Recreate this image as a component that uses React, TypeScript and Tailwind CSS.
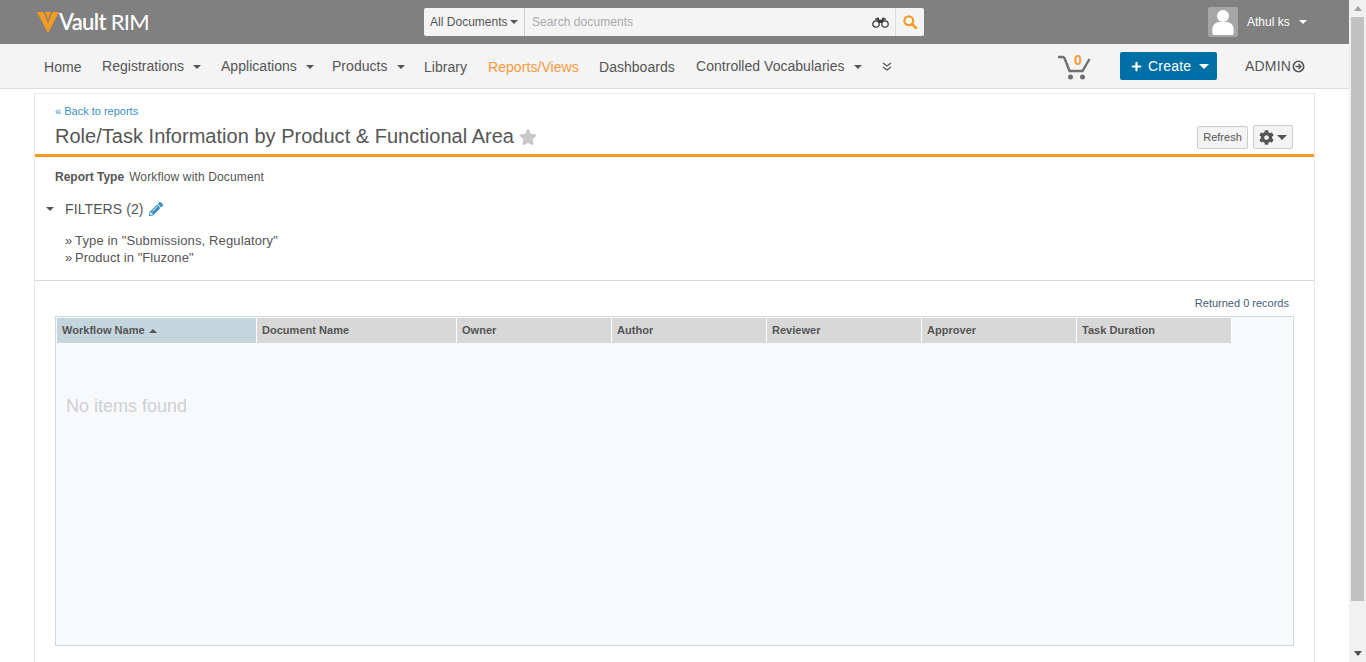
import { Plus } from "lucide-react";
import { FaCog, FaPencilAlt, FaStar } from "react-icons/fa";

const navClass = "text-[14px] tracking-[0.03px] text-[#555555]";

function Caret({ className }: { className: string }) {
  return <span className={"inline-block border-x-[4px] border-x-transparent " + className} />;
}

function NavItem({ label, width, caret }: { label: string; width: string; caret?: boolean }) {
  return (
    <div className={"flex items-center " + width}>
      <span className={navClass + (caret ? " -mt-[2px]" : "")}>{label}</span>
      {caret && <Caret className="ml-[9px] border-t-[4px] border-t-[#555555]" />}
    </div>
  );
}

function Logo() {
  return (
    <div className="flex items-center w-[424px] pl-[37px]">
      <svg width="22" height="22" viewBox="0 0 22 22" className="-mt-[1px]">
        <path d="M0 1h6.5l4.5 11 4.5-11H22L11 22z" fill="#f59a23" />
        <path d="M8 1h6l-3 7.5z" fill="#f59a23" />
      </svg>
      <span className="ml-[0px] text-[22px] leading-none tracking-[-0.7px] font-['Lato',sans-serif] font-semibold text-white">Vault</span>
      <span className="ml-[5px] text-[22px] leading-none tracking-[-0.7px] font-['Lato',sans-serif] font-normal text-white">RIM</span>
    </div>
  );
}

function Binoculars() {
  return (
    <svg width="17" height="11" viewBox="0 0 17 11" className="mr-[6px]">
      <path d="M3 2.5L5 1h1.5v2M14 2.5L12 1h-1.5v2M6 3h5v2.5H6z" fill="#333333" stroke="#333333" strokeWidth="0.8" />
      <circle cx="4" cy="7" r="3.2" fill="#f4f4f4" stroke="#333333" strokeWidth="1.2" />
      <circle cx="13" cy="7" r="3.2" fill="#f4f4f4" stroke="#333333" strokeWidth="1.2" />
    </svg>
  );
}

function SearchBar() {
  return (
    <div className="flex items-center w-[500px] h-[28px] bg-[#f4f4f4] rounded-[2px]">
      <div className="flex items-center w-[101px] h-full pl-[6px] border-r border-[#cccccc] text-[12px] tracking-[0.02px] text-[#555555]">
        All Documents
        <Caret className="ml-[2px] border-t-[4px] border-t-[#555555]" />
      </div>
      <span className="flex-1 pl-[7px] text-[12px] tracking-[0.07px] text-[#a9a9a9]">Search documents</span>
      <Binoculars />
      <div className="flex items-center justify-center w-[29px] h-full border-l border-[#dddddd]">
        <svg width="14" height="14" viewBox="0 0 14 14">
          <circle cx="5.8" cy="5.8" r="4.4" fill="none" stroke="#f59a23" strokeWidth="2.2" />
          <path d="M9 9l4 4" stroke="#f59a23" strokeWidth="2.6" strokeLinecap="round" />
        </svg>
      </div>
    </div>
  );
}

function UserMenu() {
  return (
    <div className="flex items-center ml-[284px]">
      <div className="flex items-end justify-center w-[30px] h-[30px] rounded-[2px] bg-[#a6a6a6] overflow-hidden">
        <svg width="22" height="26" viewBox="0 0 22 26" className="mb-[2px]">
          <circle cx="11" cy="7" r="6" fill="#ffffff" />
          <path d="M1 26c-1-2-1-6 0-9 1-2 4-4 6-4h8c2 0 5 2 6 4 1 3 1 7 0 9z" fill="#ffffff" />
        </svg>
      </div>
      <span className="ml-[9px] text-[12px] font-medium text-white">Athul ks</span>
      <Caret className="ml-[9px] border-t-[4px] border-t-white" />
    </div>
  );
}

function Cart() {
  return (
    <div className="relative w-[34px] h-[26px] mr-[28px]">
      <svg width="34" height="26" viewBox="0 0 34 26">
        <path d="M0 3h5l1.5 1 5 13h13l7-12" fill="none" stroke="#6f6f6f" strokeWidth="2.4" />
        <circle cx="12.5" cy="23" r="2.5" fill="#6f6f6f" />
        <circle cx="24.5" cy="23" r="2.5" fill="#6f6f6f" />
      </svg>
      <span className="absolute left-[16px] -top-[4px] text-[14px] font-bold text-[#f79a3e]">0</span>
    </div>
  );
}

function ReportHeader() {
  return (
    <div className="flex items-end justify-between h-[63px] pl-[20px] pr-[21px] border-b-[3px] border-[#f59a23]">
      <div>
        <div className="text-[11px] leading-[13px] mb-[3px] text-[#3b8fc4]">« Back to reports</div>
        <div className="flex items-center h-[30px] mb-[3px]">
          <h1 className="text-[20px] tracking-[0.02px] text-[#555555] font-normal">Role/Task Information by Product &amp; Functional Area</h1>
          <FaStar size={18} className="ml-[5px] mt-[2px] text-[#c9c9c9]" />
        </div>
      </div>
      <div className="flex items-center gap-[5px] mb-[5px]">
        <button className="w-[51px] h-[23px] text-[11px] text-[#555555] bg-[#f4f4f4] border border-[#cccccc] rounded-[2px]">Refresh</button>
        <button className="flex items-center justify-center gap-[3px] w-[40px] h-[24px] bg-[#f4f4f4] border border-[#cccccc] rounded-[2px]">
          <FaCog size={15} className="text-[#555555]" />
          <Caret className="border-x-[5px] border-t-[5px] border-t-[#555555]" />
        </button>
      </div>
    </div>
  );
}

function FilterSummary() {
  return (
    <div className="h-[124px] border-b border-[#d8d8d8]">
      <div className="pl-[20px] pt-[13px] text-[12px] leading-[15px] text-[#555555]">
        <span className="font-bold">Report Type</span>
        <span className="ml-[5px] tracking-[0.14px]">Workflow with Document</span>
      </div>
      <div className="flex items-center mt-[15px] h-[18px] pl-[11px]">
        <Caret className="border-t-[4px] border-t-[#555555]" />
        <span className="ml-[11px] text-[14px] tracking-[0.1px] text-[#555555]">FILTERS (2)</span>
        <FaPencilAlt size={14} className="ml-[5px] text-[#3b8fc4]" />
      </div>
      <div className="mt-[14px] pl-[30px] text-[13px] leading-[17px] text-[#555555]">
        <div className="tracking-[0.13px]"><span className="mr-[-1px]">»&nbsp;</span>Type in "Submissions, Regulatory"</div>
        <div className="tracking-[0.05px]"><span className="mr-[-1px]">»&nbsp;</span>Product in "Fluzone"</div>
      </div>
    </div>
  );
}

const columns = [
  { label: "Document Name", width: "w-[200px]" },
  { label: "Owner", width: "w-[155px]" },
  { label: "Author", width: "w-[155px]" },
  { label: "Reviewer", width: "w-[155px]" },
  { label: "Approver", width: "w-[155px]" },
  { label: "Task Duration", width: "w-[155px]" },
];

function ResultsTable() {
  return (
    <div className="px-[20px]">
      <div className="h-[35px] pt-[15px] pr-[5px] text-right text-[11px] leading-[14px] text-[#3f5f75]">Returned 0 records</div>
      <div className="h-[330px] p-[1px] border border-[#cdd8e0] bg-[#f8f9fb]">
        <div className="flex h-[25px] text-[11px] font-bold tracking-[0.03px] text-[#555555]">
          <div className="flex items-center w-[200px] pl-[5px] bg-[#c5d5de] border-r border-white">
            Workflow Name
            <Caret className="ml-[4px] border-b-[4px] border-b-[#555555]" />
          </div>
          {columns.map((col) => (
            <div key={col.label} className={"flex items-center pl-[5px] bg-[#d8d8d8] border-r border-white " + col.width}>
              {col.label}
            </div>
          ))}
        </div>
        <div className="mt-[50px] ml-[9px] text-[18px] leading-[26px] text-[#cfd0d2]">No items found</div>
      </div>
    </div>
  );
}

function Scrollbar() {
  return (
    <div className="flex flex-col items-center w-[17px] h-full bg-[#f1f1f1]">
      <div className="flex items-center justify-center h-[17px]">
        <Caret className="border-b-[5px] border-b-[#a3a3a3]" />
      </div>
      <div className="w-[13px] h-[584px] bg-[#c1c1c1]" />
      <div className="flex-1" />
      <div className="flex items-center justify-center h-[17px]">
        <Caret className="border-t-[5px] border-t-[#505050]" />
      </div>
    </div>
  );
}

export default function App() {
  return (
    <div className="flex h-[662px] overflow-hidden bg-white font-['Liberation_Sans',Arial,sans-serif]">
      <div className="flex-1 min-w-0">
        {/* Top bar */}
        <div className="flex items-center h-[44px] bg-[#808080]">
          <Logo />
          <SearchBar />
          <UserMenu />
        </div>

        {/* Main nav */}
        <div className="flex items-center h-[45px] pt-[2px] pl-[44px] bg-[#f4f4f4] border-b border-[#dddddd]">
          <NavItem label="Home" width="w-[58px]" />
          <NavItem label="Registrations" caret width="w-[119px]" />
          <NavItem label="Applications" caret width="w-[111px]" />
          <NavItem label="Products" caret width="w-[92px]" />
          <NavItem label="Library" width="w-[64px]" />
          <div className="w-[111px] text-[14px] tracking-[0.06px] text-[#f79a3e]">Reports/Views</div>
          <NavItem label="Dashboards" width="w-[97px]" />
          <NavItem label="Controlled Vocabularies" caret width="w-[186px]" />
          <svg width="10" height="10" viewBox="0 0 10 10" className="-mt-[1px]">
            <path d="M1 1l4 3 4-3M1 5l4 3 4-3" fill="none" stroke="#555555" strokeWidth="1.3" />
          </svg>
          <div className="w-[166px]" />
          <Cart />
          <button className="-mt-[2px] flex items-center w-[97px] h-[28px] pl-[10px] rounded-[2px] bg-[#006fa6] text-[14px] tracking-[0.2px] font-medium text-white">
            <Plus size={13} strokeWidth={4} />
            <span className="ml-[5px]">Create</span>
            <Caret className="ml-[8px] border-x-[5px] border-t-[5px] border-t-white" />
          </button>
          <span className="ml-[28px] text-[14px] tracking-[0.2px] -mt-[2px] text-[#555555]">ADMIN</span>
          <svg width="13" height="13" viewBox="0 0 13 13" className="ml-[1px] -mt-[2px]">
            <circle cx="6.5" cy="6.5" r="5.2" fill="none" stroke="#555555" strokeWidth="1.6" />
            <path d="M3.5 6.5h5M6.5 4l2.5 2.5L6.5 9" fill="none" stroke="#555555" strokeWidth="1.4" />
          </svg>
        </div>

        {/* Report card */}
        <div className="ml-[34px] mr-[34px] mt-[4px] h-[600px] border-x border-t border-[#e8e8e8]">
          <ReportHeader />
          <FilterSummary />
          <ResultsTable />
        </div>
      </div>
      <Scrollbar />
    </div>
  );
}
